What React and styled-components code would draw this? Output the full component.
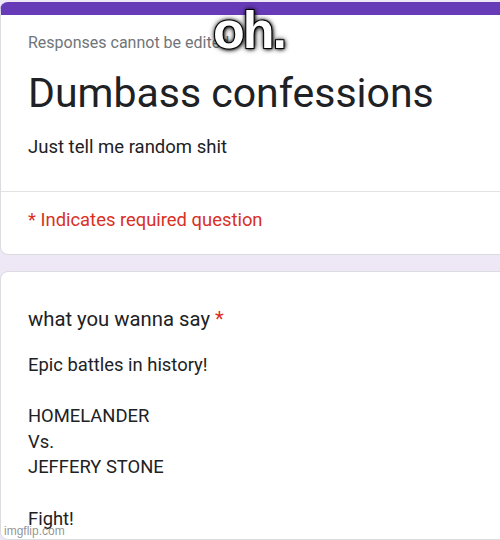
import React from "react";
import styled, { createGlobalStyle } from "styled-components";

const COLORS = {
  purple: "#673ab7",
  lavender: "#ede7f6",
  text: "#202124",
  gray: "#70757a",
  red: "#d93025",
  border: "#dadce0",
};

const GlobalStyle = createGlobalStyle`
  body {
    margin: 0;
    background: ${COLORS.lavender};
    font-family: Roboto, "Liberation Sans", sans-serif;
  }
`;

const Page = styled.div`
  position: relative;
  width: 500px;
  height: 540px;
  overflow: hidden;
  display: flex;
  flex-direction: column;
  gap: 16px;
  padding-top: 2px;
  box-sizing: border-box;
`;

const Card = styled.section`
  width: 520px;
  background: #fff;
  border: 1px solid ${COLORS.border};
  border-radius: 8px;
  box-sizing: border-box;
`;

const HeaderCard = styled(Card)`
  border-top: 13px solid ${COLORS.purple};
`;

const HeaderTop = styled.div`
  padding: 18px 0 32px 27px;
  border-bottom: 1px solid #e3e3e3;
`;

const Notice = styled.div`
  font-size: 16px;
  color: ${COLORS.gray};
  line-height: 20px;
`;

const Title = styled.h1`
  margin: 14px 0 0;
  font-size: 41px;
  font-weight: 400;
  color: ${COLORS.text};
  line-height: 52px;
`;

const Description = styled.p`
  margin: 16px 0 0;
  font-size: 18.5px;
  color: ${COLORS.text};
  line-height: 24px;
`;

const Required = styled.div`
  padding: 16px 0 22px 27px;
  font-size: 18.4px;
  line-height: 24px;
  color: ${COLORS.red};
`;

const QuestionCard = styled(Card)`
  flex: 1;
  padding: 34px 0 0 27px;
`;

const Question = styled.div`
  font-size: 20.3px;
  line-height: 26px;
  color: ${COLORS.text};
`;

const Star = styled.span`
  color: ${COLORS.red};
`;

const Answer = styled.div`
  margin-top: 20px;
  font-size: 18.4px;
  line-height: 25.6px;
  color: ${COLORS.text};
  white-space: pre-line;
`;

/* meme caption laid over the form */
const Caption = styled.div`
  position: absolute;
  top: 0;
  left: 213px;
  font-family: "Liberation Sans", Arial, sans-serif;
  font-weight: 700;
  font-size: 52px;
  line-height: 60px;
  letter-spacing: -2px;
  color: #fff;
  -webkit-text-stroke: 2px #000;
  paint-order: stroke fill;
  text-shadow: 0 0 3px #000, 0 0 6px #000, 1px 1px 4px #000;
`;

const Watermark = styled.div`
  position: absolute;
  left: 4px;
  bottom: 2px;
  font-family: "Liberation Sans", Arial, sans-serif;
  font-size: 12px;
  color: rgba(120, 120, 120, 0.8);
`;

export default function App() {
  return (
    <>
      <GlobalStyle />
      <Page>
        <HeaderCard>
          <HeaderTop>
            <Notice>Responses cannot be edited</Notice>
            <Title>Dumbass confessions</Title>
            <Description>Just tell me random shit</Description>
          </HeaderTop>
          <Required>* Indicates required question</Required>
        </HeaderCard>
        <QuestionCard>
          <Question>
            what you wanna say <Star>*</Star>
          </Question>
          <Answer>
            {"Epic battles in history!\n\nHOMELANDER\nVs.\nJEFFERY STONE\n\nFight!"}
          </Answer>
        </QuestionCard>
        <Caption>oh.</Caption>
        <Watermark>imgflip.com</Watermark>
      </Page>
    </>
  );
}
